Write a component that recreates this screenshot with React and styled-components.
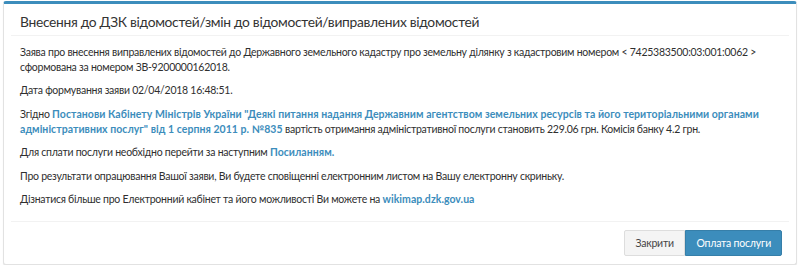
import React from "react";
import styled, { createGlobalStyle } from "styled-components";

const GlobalStyle = createGlobalStyle`
  html, body { margin: 0; padding: 0; background: #ffffff; }
  body { font-family: Lato, "Open Sans", sans-serif; color: #333; }
`;

const Panel = styled.div`
  margin: 1px 2px 0 3px;
  border: 1px solid #e2e2e2;
  border-top: 3px solid #3c8dbc;
  border-radius: 3px;
  box-shadow: 0 1px 1px rgba(0, 0, 0, 0.1);
  background: #fff;
  padding: 0 7px;
`;

const Header = styled.div`
  padding: 10px 9px 5px;
  border-bottom: 1px solid #f2f2f2;
`;

const Title = styled.h3`
  margin: 0;
  font-family: Lato, sans-serif;
  font-weight: 400;
  font-size: 13.8px;
  letter-spacing: -0.3px;
  line-height: 16px;
  color: #333;
`;

const Body = styled.div`
  padding: 9px 9px 6px;
`;

const Para = styled.p`
  margin: 0 0 8.4px;
  font-size: 10.5px;
  letter-spacing: -0.25px;
  line-height: 15px;
  color: #2f2f2f;
`;

const Link = styled.a`
  color: #3c8dbc;
  font-weight: 700;
  letter-spacing: 0.05px;
  text-decoration: none;
`;

const Footer = styled.div`
  display: flex;
  justify-content: flex-end;
  padding: 8px 7px 8px;
  border-top: 1px solid #f2f2f2;
`;

const BtnGroup = styled.div`
  display: flex;
`;

const Button = styled.button`
  height: 26px;
  padding: 0 ${(p) => (p.$primary ? "10px" : "10.5px")};
  font-family: Lato, sans-serif;
  font-size: 10.5px;
  letter-spacing: -0.2px;
  border: 1px solid ${(p) => (p.$primary ? "#367fa9" : "#dddddd")};
  background: ${(p) => (p.$primary ? "#3c8dbc" : "#f4f4f4")};
  color: ${(p) => (p.$primary ? "#ffffff" : "#444444")};
  border-radius: ${(p) => (p.$primary ? "0 2px 2px 0" : "2px 0 0 2px")};
  cursor: pointer;
`;

export default function App() {
  return (
    <>
      <GlobalStyle />
      <Panel>
        <Header>
          <Title>Внесення до ДЗК відомостей/змін до відомостей/виправлених відомостей</Title>
        </Header>
        <Body>
          <Para>
            Заява про внесення виправлених відомостей до Державного земельного кадастру про земельну ділянку з
            кадастровим номером &lt; 7425383500:03:001:0062 &gt; сформована за номером ЗВ-9200000162018.
          </Para>
          <Para>Дата формування заяви 02/04/2018 16:48:51.</Para>
          <Para>
            Згідно{" "}
            <Link href="#">
              Постанови Кабінету Міністрів України "Деякі питання надання Державним агентством земельних ресурсів та
              його територіальними органами
            </Link>{" "}
            <Link href="#">адміністративних послуг" від 1 серпня 2011 р. №835</Link> вартість отримання
            адміністративної послуги становить 229.06 грн. Комісія банку 4.2 грн.
          </Para>
          <Para>
            Для сплати послуги необхідно перейти за наступним <Link href="#">Посиланням.</Link>
          </Para>
          <Para>Про результати опрацювання Вашої заяви, Ви будете сповіщенні електронним листом на Вашу електронну скриньку.</Para>
          <Para>
            Дізнатися більше про Електронний кабінет та його можливості Ви можете на <Link href="#">wikimap.dzk.gov.ua</Link>
          </Para>
        </Body>
        <Footer>
          <BtnGroup>
            <Button>Закрити</Button>
            <Button $primary>Оплата послуги</Button>
          </BtnGroup>
        </Footer>
      </Panel>
    </>
  );
}
